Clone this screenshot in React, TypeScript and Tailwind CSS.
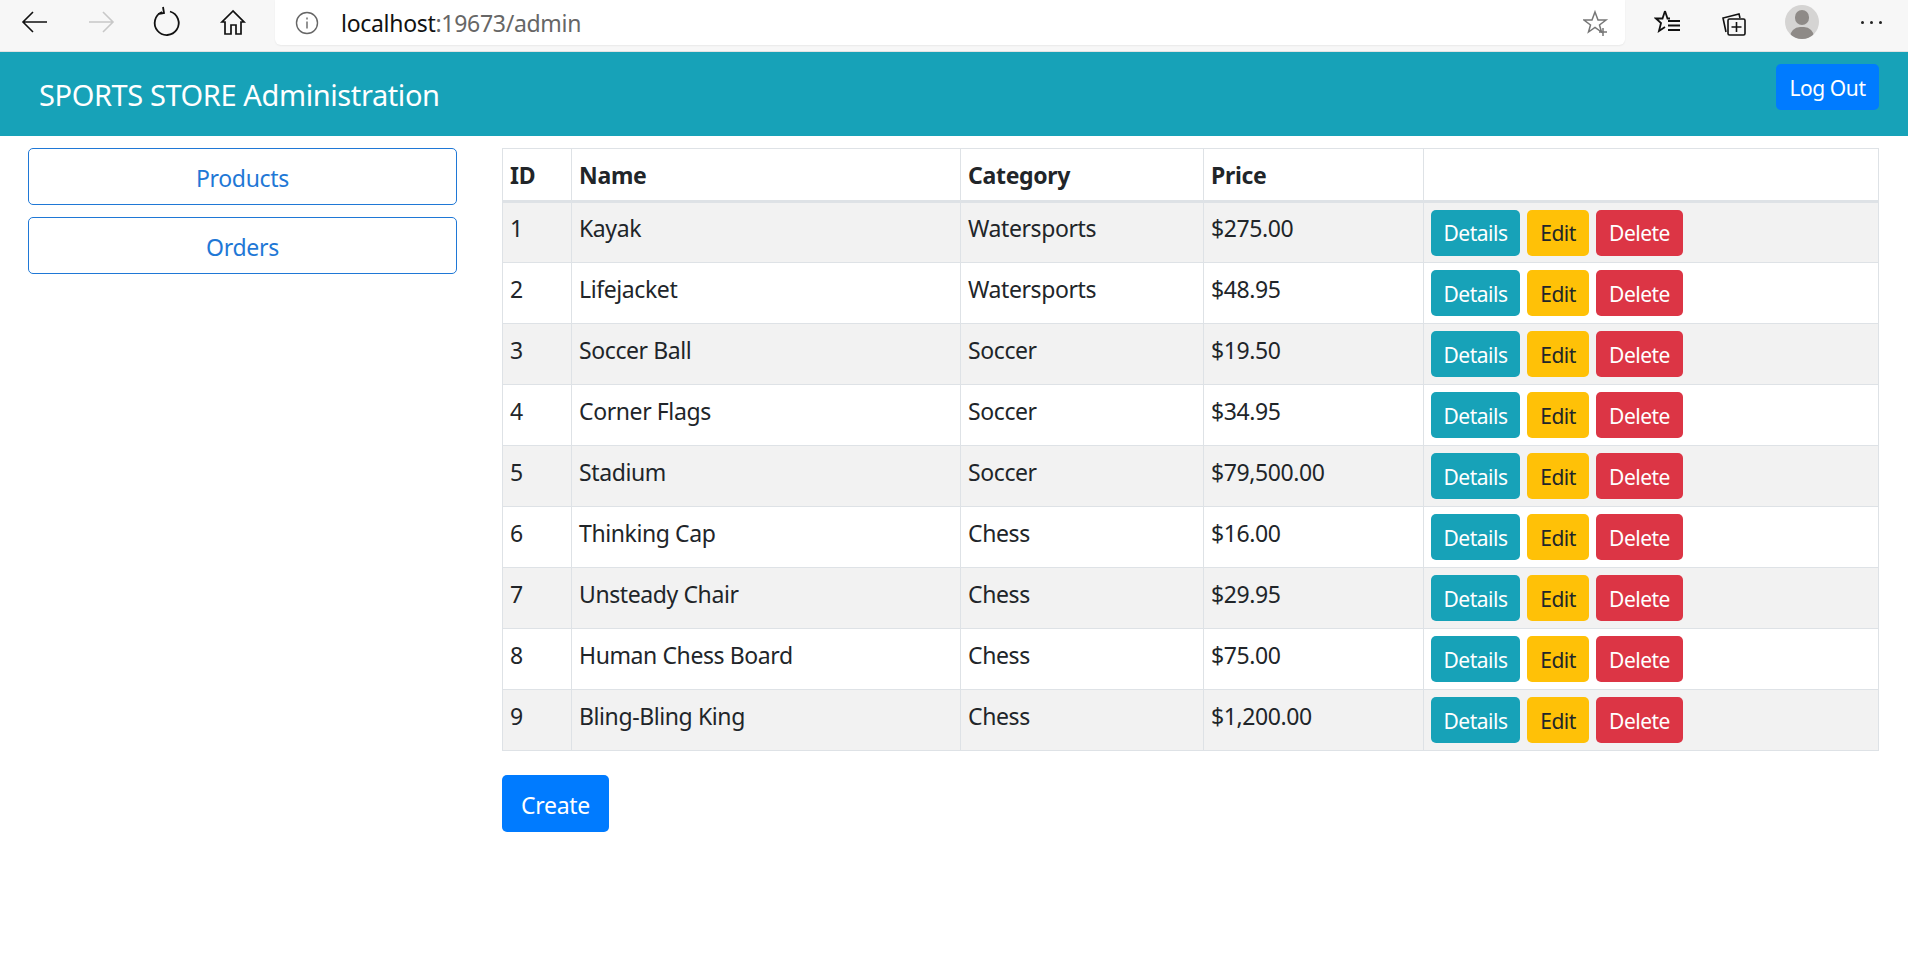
import React from "react";

const rows = [
  ["1", "Kayak", "Watersports", "$275.00"],
  ["2", "Lifejacket", "Watersports", "$48.95"],
  ["3", "Soccer Ball", "Soccer", "$19.50"],
  ["4", "Corner Flags", "Soccer", "$34.95"],
  ["5", "Stadium", "Soccer", "$79,500.00"],
  ["6", "Thinking Cap", "Chess", "$16.00"],
  ["7", "Unsteady Chair", "Chess", "$29.95"],
  ["8", "Human Chess Board", "Chess", "$75.00"],
  ["9", "Bling-Bling King", "Chess", "$1,200.00"],
];

function BrowserBar() {
  return (
    <div className="h-[52px] bg-[#f7f7f7] border-b border-[#e2e2e2] flex items-start relative">
      <svg className="absolute left-[20px] top-[8px]" width="30" height="30" viewBox="0 0 30 30" fill="none" stroke="#111" strokeWidth="1.6"><path d="M3 14h24M13 4 3 14l10 10" /></svg>
      <svg className="absolute left-[86px] top-[8px]" width="30" height="30" viewBox="0 0 30 30" fill="none" stroke="#c8c8c8" strokeWidth="1.6"><path d="M3 14h24M17 4l10 10-10 10" /></svg>
      <svg className="absolute left-[152px] top-[6px]" width="30" height="32" viewBox="0 0 30 32" fill="none" stroke="#111" strokeWidth="1.8"><path d="M10 6A12 12 0 1 0 18 5.500M11 1l1 6-6 1" /></svg>
      <svg className="absolute left-[219px] top-[8px]" width="28" height="30" viewBox="0 0 28 30" fill="none" stroke="#111" strokeWidth="1.7"><path d="M14 3 3 14h3v12h6v-9h5v9h5V14h3Z" /></svg>
      <div className="absolute left-[275px] top-0 w-[1350px] h-[45px] bg-white rounded-b-[6px] shadow-[0_1px_2px_rgba(0,0,0,0.06)] flex items-center">
        <svg className="ml-[20px]" width="24" height="24" viewBox="0 0 24 24" fill="none" stroke="#666" strokeWidth="1.4"><circle cx="12" cy="12" r="10.500" /><path d="M12 10.500v7M12 6.500v2" /></svg>
        <span className="ml-[22px] pt-[2px] text-[23px] leading-none tracking-[-0.3px] text-[#111] font-['Noto_Sans',sans-serif]">localhost<span className="text-[#666]">:19673/admin</span></span>
        <svg className="ml-auto mr-[16px]" width="26" height="28" viewBox="0 0 26 28" fill="none" stroke="#777" strokeWidth="1.5"><path d="M12 3l3 8h8l-6.500 5 2 7-6.500-4.500L5.500 23l2-7L1 11h8Z" /><path d="M20 19v8M16 23h8" /></svg>
      </div>
      <svg className="absolute left-[1654px] top-[9px]" width="28" height="28" viewBox="0 0 28 28" fill="none" stroke="#111" strokeWidth="1.8"><path d="M11 2l2.500 7.500H16M11 2 8.500 9.500H2l5 4.500-2 8 6-4M14 12h12M14 16.500h12M14 21h12" /></svg>
      <svg className="absolute left-[1720px] top-[10px]" width="28" height="28" viewBox="0 0 28 28" fill="none" stroke="#111" strokeWidth="1.6"><path d="M6 22 3 8l16-4 1 4" /><rect x="8" y="9" width="17" height="16" rx="1.500" /><path d="M16.500 12v10M11.500 17h10" /></svg>
      <div className="absolute left-[1785px] top-[5px] w-[34px] h-[34px] rounded-full bg-[#d5d4d3] overflow-hidden">
        <div className="absolute left-[10px] top-[5px] w-[14px] h-[15px] rounded-full bg-[#8e8a87]" />
        <div className="absolute left-[5px] top-[22px] w-[24px] h-[20px] rounded-full bg-[#8e8a87]" />
      </div>
      <div className="absolute left-[1861px] top-[21px] flex gap-[6px]">
        <div className="w-[3px] h-[3px] rounded-full bg-[#222]" />
        <div className="w-[3px] h-[3px] rounded-full bg-[#222]" />
        <div className="w-[3px] h-[3px] rounded-full bg-[#222]" />
      </div>
    </div>
  );
}

function ActionButton({ label, className }: { label: string; className: string }) {
  return (
    <button className={"h-[46px] pt-[3px] rounded-[5px] text-[21px] tracking-[-0.5px] " + className}>{label}</button>
  );
}

export default function App() {
  return (
    <div className="w-[1908px] h-[961px] bg-white overflow-hidden text-[#212529] font-['Noto_Sans',sans-serif]">
      <BrowserBar />
      <header className="h-[84px] bg-[#17a2b8] flex items-start justify-between pl-[39px] pr-[29px]">
        <div className="text-[29px] tracking-[-0.4px] leading-[86px] text-white">SPORTS STORE Administration</div>
        <button className="mt-[12px] pt-[4px] w-[103px] h-[46px] rounded-[5px] bg-[#007bff] text-white text-[21px] tracking-[-0.4px]">Log Out</button>
      </header>
      <main className="flex pt-[12px] pl-[28px] pr-[29px]">
        <aside className="w-[429px] mr-[45px] flex flex-col gap-[12px]">
          <button className="h-[57px] pt-[3px] rounded-[5px] border border-[#1f78d6] text-[#1f78d6] text-[23px] tracking-[-0.3px]">Products</button>
          <button className="h-[57px] pt-[3px] rounded-[5px] border border-[#1f78d6] text-[#1f78d6] text-[23px] tracking-[-0.3px]">Orders</button>
        </aside>
        <section className="w-[1377px]">
          <table className="w-[1377px] table-fixed border-collapse text-[23px] tracking-[-0.4px]">
            <colgroup>
              <col className="w-[69px]" />
              <col className="w-[389px]" />
              <col className="w-[243px]" />
              <col className="w-[220px]" />
              <col />
            </colgroup>
            <thead>
              <tr className="h-[53px]">
                {["ID", "Name", "Category", "Price", ""].map((h, i) => (
                  <th key={i} className="border border-[#dee2e6] border-b-[3px] px-[7px] pt-[1px] text-left font-bold tracking-[-0.3px]">{h}</th>
                ))}
              </tr>
            </thead>
            <tbody>
              {rows.map((r, i) => (
                <tr key={r[0]} className={"h-[61px] " + (i % 2 === 0 ? "bg-[#f2f2f2]" : "bg-white")}>
                  {r.map((c, j) => (
                    <td key={j} className="border border-[#dee2e6] px-[7px] pb-[8px] align-middle">{c}</td>
                  ))}
                  <td className="border border-[#dee2e6] px-[7px]">
                    <div className="flex gap-[7px]">
                      <ActionButton label="Details" className="w-[89px] bg-[#17a2b8] text-white" />
                      <ActionButton label="Edit" className="w-[62px] bg-[#ffc107] text-[#212529]" />
                      <ActionButton label="Delete" className="w-[87px] bg-[#dc3545] text-white" />
                    </div>
                  </td>
                </tr>
              ))}
            </tbody>
          </table>
          <button className="mt-[24px] pt-[3px] w-[107px] h-[57px] rounded-[5px] bg-[#007bff] text-white text-[23px] tracking-[-0.3px]">Create</button>
        </section>
      </main>
    </div>
  );
}
